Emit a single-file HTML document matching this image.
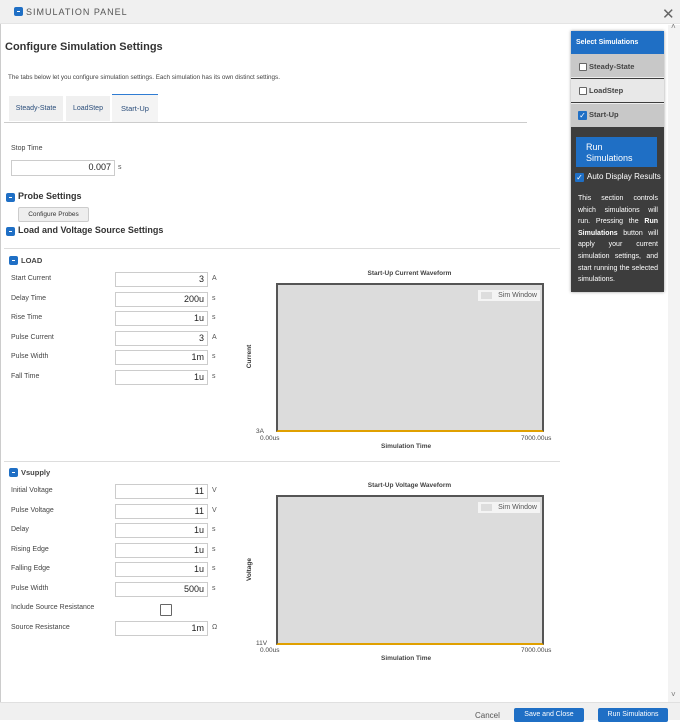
<!DOCTYPE html><html><head><style>
*{margin:0;padding:0;box-sizing:border-box}
body{width:680px;height:720px;position:relative;overflow:hidden;background:#fff;font-family:"Liberation Sans",sans-serif;color:#333}
.a{position:absolute;white-space:nowrap}
.ic{position:absolute;width:9px;height:9px;background:#1f6fc5;border-radius:2px}
.ic:after{content:"";position:absolute;left:3px;top:4px;width:3px;height:1px;background:#fff}
.lb{font-size:7px;color:#444}
.in{position:absolute;height:15px;border:1px solid #ccc;background:#fff;font-size:9px;text-align:right;padding-right:3px;line-height:13px;color:#222}
.u{font-size:7px;color:#555}
.plot{position:absolute;background:#dcdcdc;border:2px solid #555;border-bottom:2px solid #e0a000}
.leg{position:absolute;right:2px;top:5px;width:62px;height:11px;background:#f4f4f4;font-size:7px;color:#555;line-height:11px;text-align:right;padding-right:3px}
.leg:before{content:"";position:absolute;left:3px;top:2px;width:11px;height:7px;background:#ddd}
.cb{position:absolute;width:8px;height:8px;border:1px solid #666;background:#fff;border-radius:1px}
.cbc{position:absolute;width:9px;height:9px;background:#1f6fc5;border-radius:1px;color:#fff;font-size:8px;line-height:9px;text-align:center}
.btn{position:absolute;background:#1f6fc5;color:#fff;font-size:7px;text-align:center;border-radius:2px}
</style></head><body>
<div class="a" style="left:0;top:0;width:680px;height:24px;background:#f0f0f0;border-bottom:1px solid #e4e4e4"></div>
<div class="ic" style="left:14px;top:7px"></div>
<div class="a" style="left:26px;top:7px;font-size:9px;letter-spacing:1px;color:#555">SIMULATION PANEL</div>
<div class="a" style="left:662px;top:5px;font-size:15px;color:#666">✕</div>
<div class="a" style="left:0;top:24px;width:1px;height:680px;background:#ccc"></div>
<div class="a" style="left:5px;top:41px;font-size:11px;font-weight:bold;color:#333">Configure Simulation Settings</div>
<div class="a" style="left:8px;top:74px;font-size:6.3px;color:#444">The tabs below let you configure simulation settings. Each simulation has its own distinct settings.</div>
<div class="a" style="left:9px;top:96px;width:54px;height:25px;background:#f0f0f0;font-size:7px;color:#2a4d7a;text-align:center;line-height:25px">Steady-State</div>
<div class="a" style="left:66px;top:96px;width:44px;height:25px;background:#f0f0f0;font-size:7px;color:#2a4d7a;text-align:center;line-height:25px">LoadStep</div>
<div class="a" style="left:112px;top:94px;width:46px;height:28px;background:#f4f4f4;border-top:1px solid #2f7cd3;font-size:7.5px;color:#2a4d7a;text-align:center;line-height:28px">Start-Up</div>
<div class="a" style="left:4px;top:122px;width:523px;height:1px;background:#ccc"></div>
<div class="a lb" style="left:11px;top:145px">Stop Time</div>
<div class="in" style="left:11px;top:160px;width:104px;height:16px">0.007</div>
<div class="a u" style="left:118px;top:164px">s</div>
<div class="ic" style="left:6px;top:193px"></div>
<div class="a" style="left:18px;top:191px;font-size:9px;font-weight:bold">Probe Settings</div>
<div class="a" style="left:18px;top:207px;width:71px;height:15px;background:#eee;border:1px solid #ccc;border-radius:2px;font-size:6.5px;text-align:center;line-height:13px">Configure Probes</div>
<div class="ic" style="left:6px;top:227px"></div>
<div class="a" style="left:18px;top:225px;font-size:9px;font-weight:bold">Load and Voltage Source Settings</div>
<div class="a" style="left:4px;top:248px;width:556px;height:1px;background:#ddd"></div>
<div class="ic" style="left:9px;top:256px"></div>
<div class="a" style="left:21px;top:256px;font-size:7.5px;font-weight:bold;color:#444">LOAD</div>
<div class="a lb" style="left:11px;top:275px">Start Current</div><div class="in" style="left:115px;top:272px;width:93px">3</div><div class="a u" style="left:212px;top:275px">A</div>
<div class="a lb" style="left:11px;top:295px">Delay Time</div><div class="in" style="left:115px;top:292px;width:93px">200u</div><div class="a u" style="left:212px;top:295px">s</div>
<div class="a lb" style="left:11px;top:314px">Rise Time</div><div class="in" style="left:115px;top:311px;width:93px">1u</div><div class="a u" style="left:212px;top:314px">s</div>
<div class="a lb" style="left:11px;top:334px">Pulse Current</div><div class="in" style="left:115px;top:331px;width:93px">3</div><div class="a u" style="left:212px;top:334px">A</div>
<div class="a lb" style="left:11px;top:353px">Pulse Width</div><div class="in" style="left:115px;top:350px;width:93px">1m</div><div class="a u" style="left:212px;top:353px">s</div>
<div class="a lb" style="left:11px;top:373px">Fall Time</div><div class="in" style="left:115px;top:370px;width:93px">1u</div><div class="a u" style="left:212px;top:373px">s</div>
<div class="a" style="left:276px;top:270px;width:267px;text-align:center;font-size:6.5px;font-weight:bold;color:#444">Start-Up Current Waveform</div>
<div class="plot" style="left:276px;top:283px;width:268px;height:149px"><div class="leg">Sim Window</div></div>
<div class="a" style="left:238px;top:353px;font-size:6.5px;font-weight:bold;transform:rotate(-90deg)">Current</div>
<div class="a" style="left:256px;top:428px;font-size:6.5px;color:#444">3A</div>
<div class="a" style="left:260px;top:435px;font-size:6.5px;color:#444">0.00us</div>
<div class="a" style="left:521px;top:435px;font-size:6.5px;color:#444">7000.00us</div>
<div class="a" style="left:381px;top:443px;font-size:6.5px;font-weight:bold;color:#444">Simulation Time</div>
<div class="a" style="left:4px;top:461px;width:556px;height:1px;background:#ddd"></div>
<div class="ic" style="left:9px;top:468px"></div>
<div class="a" style="left:21px;top:468px;font-size:7.5px;font-weight:bold;color:#444">Vsupply</div>
<div class="a lb" style="left:11px;top:487px">Initial Voltage</div><div class="in" style="left:115px;top:484px;width:93px">11</div><div class="a u" style="left:212px;top:487px">V</div>
<div class="a lb" style="left:11px;top:507px">Pulse Voltage</div><div class="in" style="left:115px;top:504px;width:93px">11</div><div class="a u" style="left:212px;top:507px">V</div>
<div class="a lb" style="left:11px;top:526px">Delay</div><div class="in" style="left:115px;top:523px;width:93px">1u</div><div class="a u" style="left:212px;top:526px">s</div>
<div class="a lb" style="left:11px;top:546px">Rising Edge</div><div class="in" style="left:115px;top:543px;width:93px">1u</div><div class="a u" style="left:212px;top:546px">s</div>
<div class="a lb" style="left:11px;top:565px">Falling Edge</div><div class="in" style="left:115px;top:562px;width:93px">1u</div><div class="a u" style="left:212px;top:565px">s</div>
<div class="a lb" style="left:11px;top:585px">Pulse Width</div><div class="in" style="left:115px;top:582px;width:93px">500u</div><div class="a u" style="left:212px;top:585px">s</div>
<div class="a lb" style="left:11px;top:604px">Include Source Resistance</div><div class="a" style="left:160px;top:604px;width:12px;height:12px;border:1px solid #666;border-radius:1px"></div>
<div class="a lb" style="left:11px;top:624px">Source Resistance</div><div class="in" style="left:115px;top:621px;width:93px">1m</div><div class="a u" style="left:212px;top:624px">Ω</div>
<div class="a" style="left:276px;top:482px;width:267px;text-align:center;font-size:6.5px;font-weight:bold;color:#444">Start-Up Voltage Waveform</div>
<div class="plot" style="left:276px;top:495px;width:268px;height:150px"><div class="leg">Sim Window</div></div>
<div class="a" style="left:238px;top:566px;font-size:6.5px;font-weight:bold;transform:rotate(-90deg)">Voltage</div>
<div class="a" style="left:256px;top:640px;font-size:6.5px;color:#444">11V</div>
<div class="a" style="left:260px;top:647px;font-size:6.5px;color:#444">0.00us</div>
<div class="a" style="left:521px;top:647px;font-size:6.5px;color:#444">7000.00us</div>
<div class="a" style="left:381px;top:655px;font-size:6.5px;font-weight:bold;color:#444">Simulation Time</div>
<div class="a" style="left:668px;top:25px;width:12px;height:677px;background:#f3f3f3"></div>
<div class="a" style="left:671px;top:22px;font-size:8px;color:#777">˄</div>
<div class="a" style="left:671px;top:690px;font-size:8px;color:#777">˅</div>
<div class="a" style="left:0;top:702px;width:680px;height:18px;background:#f0f0f0;border-top:1px solid #e0e0e0"></div>
<div class="a" style="left:475px;top:711px;font-size:8px;color:#555">Cancel</div>
<div class="btn" style="left:514px;top:708px;width:70px;height:14px;line-height:14px">Save and Close</div>
<div class="btn" style="left:598px;top:708px;width:70px;height:14px;line-height:14px">Run Simulations</div>
<div class="a" style="left:571px;top:31px;width:93px;height:261px;background:#3d3d3d;box-shadow:0 0 3px #999"></div>
<div class="a" style="left:571px;top:31px;width:93px;height:23px;background:#1f6fc5;color:#fff;font-size:7px;font-weight:bold;padding:8px 0 0 5px">Select Simulations</div>
<div class="a" style="left:571px;top:54px;width:93px;height:24px;background:#c8c8c8;border-bottom:1px solid #eee"></div>
<div class="cb" style="left:579px;top:63px"></div><div class="a" style="left:589px;top:62px;font-size:7.5px;font-weight:bold;color:#444">Steady-State</div>
<div class="a" style="left:571px;top:79px;width:93px;height:23px;background:#e8e8e8"></div>
<div class="cb" style="left:579px;top:87px"></div><div class="a" style="left:589px;top:86px;font-size:7.5px;font-weight:bold;color:#444">LoadStep</div>
<div class="a" style="left:571px;top:103px;width:93px;height:24px;background:#c8c8c8;border-top:1px solid #eee"></div>
<div class="cbc" style="left:578px;top:111px">✓</div><div class="a" style="left:589px;top:110px;font-size:7.5px;font-weight:bold;color:#444">Start-Up</div>
<div class="btn" style="left:576px;top:137px;width:81px;height:30px;font-size:9px;text-align:left;padding:5px 0 0 10px;line-height:11px;border-radius:0">Run<br>Simulations</div>
<div class="cbc" style="left:575px;top:173px">✓</div>
<div class="a" style="left:587px;top:172px;font-size:8px;color:#fff">Auto Display Results</div>
<div class="a" style="left:578px;top:193px;width:80px;white-space:normal;font-size:7px;line-height:11.6px;color:#fff;text-align:justify">This section controls which simulations will run. Pressing the <b>Run Simulations</b> button will apply your current simulation settings, and start running the selected simulations.</div>
</body></html>
